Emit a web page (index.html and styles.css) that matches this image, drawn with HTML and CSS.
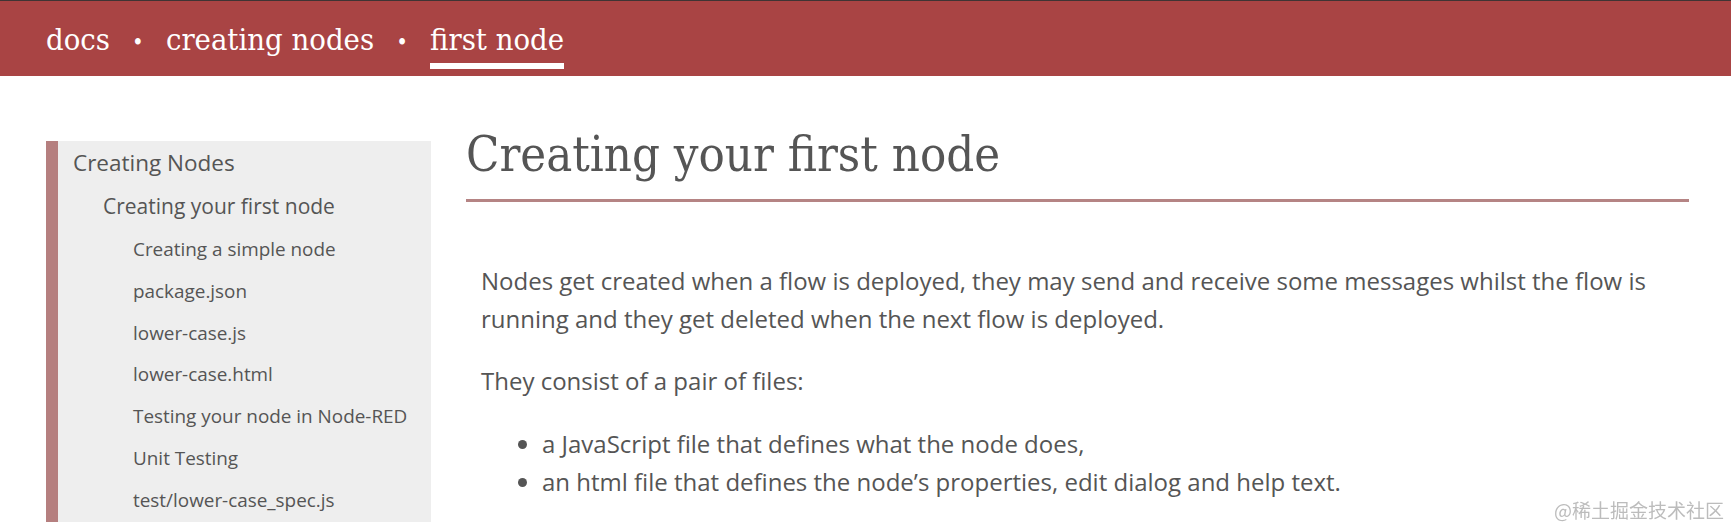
FILE: index.html
```html
<!DOCTYPE html>
<html lang="en">
<head>
<meta charset="utf-8">
<title>Creating your first node</title>
<link rel="stylesheet" href="styles.css">
</head>
<body>
<header class="topbar">
  <nav class="crumbs">
    <a class="crumb" href="#">docs</a>
    <span class="sep">•</span>
    <a class="crumb" href="#">creating nodes</a>
    <span class="sep">•</span>
    <a class="crumb current" href="#">first node</a>
  </nav>
</header>
<main class="page">
  <aside class="toc">
    <div class="toc-l1">Creating Nodes</div>
    <div class="toc-l2">Creating your first node</div>
    <ul class="toc-items">
      <li>Creating a simple node</li>
      <li>package.json</li>
      <li>lower-case.js</li>
      <li>lower-case.html</li>
      <li>Testing your node in Node-RED</li>
      <li>Unit Testing</li>
      <li>test/lower-case_spec.js</li>
    </ul>
  </aside>
  <article class="doc">
    <h1 class="doc-title">Creating your first node</h1>
    <div class="doc-body">
      <p>Nodes get created when a flow is deployed, they may send and receive some messages whilst the flow is running and they get deleted when the next flow is deployed.</p>
      <p>They consist of a pair of files:</p>
      <ul>
        <li>a JavaScript file that defines what the node does,</li>
        <li>an html file that defines the node’s properties, edit dialog and help text.</li>
      </ul>
    </div>
  </article>
</main>
<div class="watermark">@稀土掘金技术社区</div>
</body>
</html>
```
FILE: styles.css
```css
html, body {
  margin: 0;
  padding: 0;
}
body {
  font-family: "Open Sans", "Noto Sans", sans-serif;
  color: #555;
  background: #fff;
  overflow: hidden;
}

.topbar {
  box-sizing: border-box;
  height: 76px;
  border-top: 1px solid #3f3434;
  background: #a94444;
  padding: 21px 0 0 46px;
}
.crumbs {
  display: flex;
  align-items: baseline;
  gap: 19px;
  font-family: "DejaVu Serif", "Liberation Serif", serif;
  font-stretch: condensed;
  font-size: 30.7px;
  line-height: 36px;
  color: #fff;
}
.crumb {
  color: #fff;
  text-decoration: none;
}
.sep {
  width: 18px;
  text-align: center;
  font-size: 22px;
}
.current {
  padding-bottom: 5px;
  border-bottom: 6px solid #fff;
}

.page {
  display: flex;
  align-items: flex-start;
  gap: 35px;
  padding: 50px 42px 0 46px;
}

.toc {
  flex: 0 0 385px;
  box-sizing: border-box;
  margin-top: 15px;
  border-left: 12px solid #b57f7f;
  background: #eeeeee;
  padding: 0 0 0 15px;
}
.toc-l1 {
  font-size: 22.5px;
  line-height: 43px;
}
.toc-l2 {
  font-size: 21px;
  line-height: 45px;
  padding-left: 30px;
}
.toc-items {
  list-style: none;
  margin: 0;
  padding-left: 60px;
  font-size: 18.9px;
  line-height: 41.8px;
}

.doc {
  flex: 1;
  min-width: 0;
}
.doc-title {
  margin: 0;
  font-family: "DejaVu Serif", "Liberation Serif", serif;
  font-stretch: condensed;
  font-weight: normal;
  font-size: 48.6px;
  line-height: 57.6px;
  color: #555;
  padding-bottom: 15px;
  border-bottom: 3px solid #b58484;
}
.doc-body {
  padding: 60px 15px 0;
  font-size: 24px;
  line-height: 1.6;
}
.doc-body p {
  margin: 0 0 24px;
}
.doc-body ul {
  margin: 0;
  padding-left: 61px;
}

.watermark {
  position: fixed;
  right: 7px;
  bottom: 7px;
  font-family: "Noto Sans CJK SC", sans-serif;
  font-size: 19px;
  line-height: 19px;
  color: #bcbcbc;
}
```
